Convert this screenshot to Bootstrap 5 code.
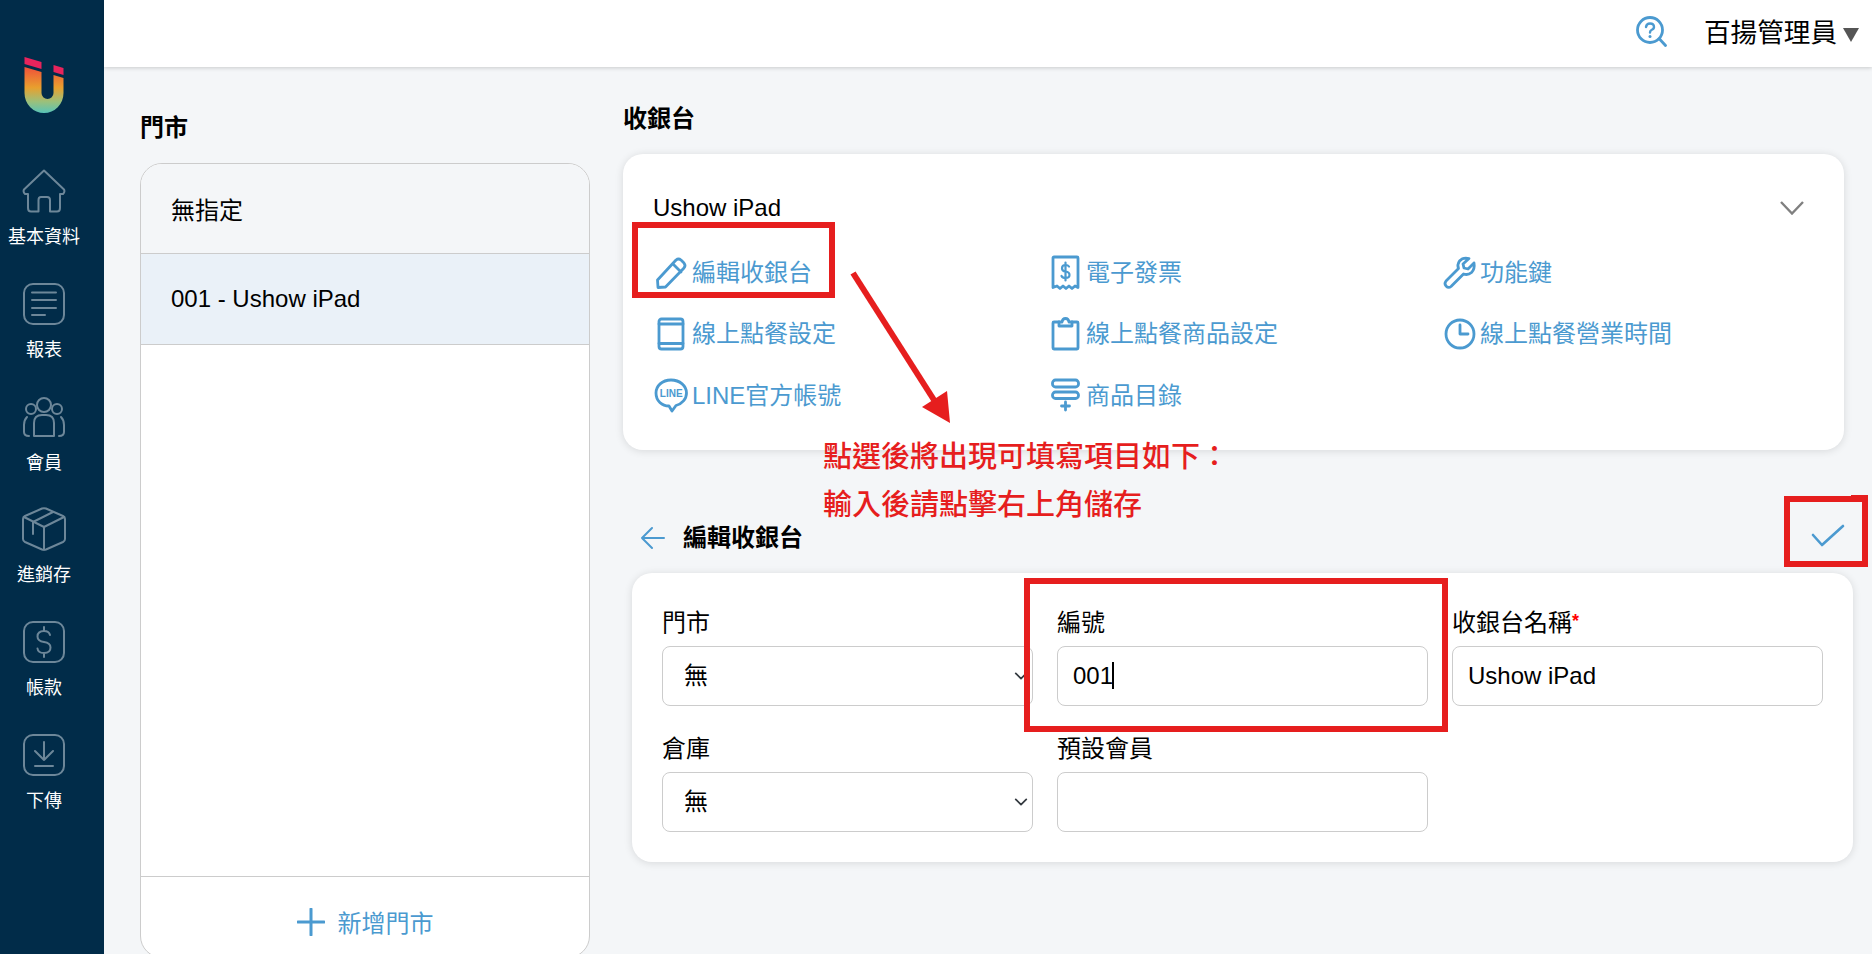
<!DOCTYPE html>
<html lang="zh-Hant">
<head>
<meta charset="UTF-8">
<title>收銀台</title>
<link href="https://cdn.jsdelivr.net/npm/bootstrap@5.3.0/dist/css/bootstrap.min.css" rel="stylesheet">
<style>
body { font-family: "Liberation Sans", "Noto Sans CJK TC", sans-serif; font-size: 24px; line-height: 36px; color: #000; background: #f4f6f8; overflow: hidden; height: 954px; }
.app-shell { height: 954px; }
.side-rail { width: 104px; flex: none; background: #012c49; padding: 57px 16px 0 0; }
.rail-logo { height: 56px; margin-bottom: 56px; }
.rail-item { width: 88px; height: 112.8px; color: #fff; font-size: 18px; line-height: 26px; text-decoration: none; }
.rail-item svg { width: 44px; height: 44px; margin-bottom: 11px; fill: none; stroke: #6d8799; stroke-width: 2; stroke-linecap: round; stroke-linejoin: round; }
.top-strip { height: 67px; background: #fff; box-shadow: 0 1px 4px rgba(0,0,0,.18); padding-right: 13px; position: relative; z-index: 1; }
.help-ico { width: 32px; height: 32px; margin-right: 37px; margin-top: -4px; }
.admin-name { font-size: 26.6px; margin-right: 6px; margin-top: -2px; }
.admin-tri { width: 16px; height: 14px; margin-top: 2px; }
.store-col { width: 450px; margin: 9px 33px 0 36px; flex: none; }
.reg-col { width: 1230px; flex: none; }
.work-area { padding-top: 34px; }
.sect-title { font-weight: 700; font-size: 24px; line-height: 36px; margin-bottom: 17px; }
.store-list { height: 795px; background: #fff; border: 1px solid #ccc; border-radius: 22px; overflow: hidden; }
.store-row { height: 90px; padding: 0 30px; border-bottom: 1px solid #ccc; background: #f4f6f8; }
.store-row.first-row { padding-top: 4px; }
.store-row.is-on { height: 91px; background: #eaf1f8; }
.store-add { height: 81px; border-top: 1px solid #ccc; color: #4b9ad0; padding-top: 10px; }
.add-txt { margin-left: 5px; padding-top: 3px; }
.panel-card { width: 1221px; background: #fff; border: 0; border-radius: 20px; box-shadow: 0 1px 8px rgba(0,0,0,.12); }
.reg-top { height: 296px; padding: 36px 0 0 30px; margin-bottom: 70px; }
.reg-head { width: 1151px; height: 36px; margin-bottom: 16px; }
.fn-grid { width: 1182px; }
.fn-link { height: 61.5px; color: #4b9ad0; text-decoration: none; }
.fn-link svg { width: 36px; height: 36px; flex: none; margin-right: 3px; fill: none; stroke: #4b9ad0; stroke-width: 2.8; stroke-linecap: round; stroke-linejoin: round; }
.edit-head { margin-left: 9px; height: 36px; margin-bottom: 17px; }
.edit-head svg { width: 24px; height: 24px; margin: 0 18px 0 9px; fill: none; stroke: #4b9ad0; stroke-width: 2; stroke-linecap: round; stroke-linejoin: round; }
.edit-card { margin-left: 9px; padding: 31px 30px 30px; }
.field-row { margin-bottom: 24px; }
.field-row:last-child { margin-bottom: 0; }
.field-lbl { display: block; line-height: 36px; padding-top: 1px; margin-bottom: 5px; height: 37px; }
.req-star { color: #f00; font-size: 18px; font-weight: 700; line-height: 0; vertical-align: 4px; }
.form-control.field-box, .form-select.field-box { height: 60px; font-size: 24px; color: #000; border-color: #ccc; border-radius: 8px; padding: 0 15px; }
.form-select.field-box { padding-left: 21px; background-position: right 2px center; background-size: 18px 14px; }
.caret-wrap { position: relative; }
.fake-caret { position: absolute; left: 55px; top: 16px; width: 1.5px; height: 27px; background: #000; }
.anno-box { position: absolute; border: 6px solid #e61e1e; z-index: 5; pointer-events: none; }
.anno-a { left: 632px; top: 222px; width: 203px; height: 76px; }
.anno-b { left: 1024px; top: 578px; width: 424px; height: 154px; }
.anno-c { left: 1784px; top: 496px; width: 84px; height: 71px; }
.anno-c::after { content: ""; position: absolute; right: -6px; top: -7px; width: 17px; height: 2px; background: #e61e1e; }
.anno-arrow { position: absolute; left: 0; top: 0; width: 1872px; height: 954px; z-index: 5; pointer-events: none; }
.anno-text { position: absolute; left: 823px; top: 433px; font-size: 29px; line-height: 48px; color: #e61e1e; font-weight: 500; z-index: 5; white-space: nowrap; }
</style>
</head>
<body>
<div class="d-flex app-shell">

    <!-- left rail -->
    <nav class="side-rail d-flex flex-column align-items-center">
        <svg class="rail-logo" width="44" height="56" viewBox="0 0 44 56">
            <defs>
                <linearGradient id="logoFill" x1="0" y1="0" x2="0" y2="1">
                    <stop offset="0" stop-color="#f0503a"/>
                    <stop offset=".45" stop-color="#e8a02e"/>
                    <stop offset=".75" stop-color="#9cc07a"/>
                    <stop offset="1" stop-color="#58c4b8"/>
                </linearGradient>
            </defs>
            <path d="M2.5 0 L19.5 5 V12 L2.5 7 Z M31.5 8 L41.5 11 V18 L31.5 15 Z" fill="#e8245c"/>
            <path d="M2.5 10 L19.5 15 V36 a6 6 0 0 0 12 0 V18 L41.5 21 V36 a19.5 20 0 0 1 -39 0 Z" fill="url(#logoFill)"/>
        </svg>
        <a class="rail-item d-flex flex-column align-items-center" href="#">
            <svg viewBox="0 0 44 44"><path d="M22 1.5 L2 20.5 Q0.8 23 3 25 H6 V39 Q6 42.5 9 42.5 H16.5 V31 Q16.5 28 19 28 H25 Q28 28 28 31 V42.5 H35 Q38 42.5 38 39 V25 H41 Q43.2 23 42 20.5 Z"/></svg>
            基本資料
        </a>
        <a class="rail-item d-flex flex-column align-items-center" href="#">
            <svg viewBox="0 0 44 44"><rect x="2" y="2" width="40" height="40" rx="9"/><path d="M10 10.5 H34 M10 18 H34 M10 26 H34 M10 33 H23"/></svg>
            報表
        </a>
        <a class="rail-item d-flex flex-column align-items-center" href="#">
            <svg viewBox="0 0 44 44"><circle cx="22" cy="10" r="7"/><circle cx="9" cy="14" r="5"/><circle cx="35" cy="14" r="5"/><path d="M12 41 V28 Q12 20 20 20 H24 Q32 20 32 28 V41 Z"/><path d="M5 22 Q2 25 2 30 V37 Q2 41 7 41 M39 22 Q42 25 42 30 V37 Q42 41 37 41"/></svg>
            會員
        </a>
        <a class="rail-item d-flex flex-column align-items-center" href="#">
            <svg viewBox="0 0 44 44"><path d="M20 1.5 Q22 .8 24 1.5 L41 9 Q43 10 43 12 V32 Q43 34 41 35 L24 42.5 Q22 43.2 20 42.5 L3 35 Q1 34 1 32 V12 Q1 10 3 9 Z"/><path d="M2 10 L22 20 L42 10 M22 20 V42.5 M11 15 L31 5 M11 15 V27"/></svg>
            進銷存
        </a>
        <a class="rail-item d-flex flex-column align-items-center" href="#">
            <svg viewBox="0 0 44 44"><rect x="2" y="2" width="40" height="40" rx="9"/><path d="M28 15 Q27 11 22 11 Q15.5 11 15.5 16.5 Q15.5 21 22 22 Q28.5 23 28.5 27.5 Q28.5 33 22 33 Q16 33 15.5 28.5 M22 7 V11 M22 33 V37"/></svg>
            帳款
        </a>
        <a class="rail-item d-flex flex-column align-items-center" href="#">
            <svg viewBox="0 0 44 44"><rect x="2" y="2" width="40" height="40" rx="9"/><path d="M22 9 V27 M13 18 L22 27 L31 18 M13 33 H31"/></svg>
            下傳
        </a>
    </nav>

    <div class="flex-grow-1">
        <header class="top-strip d-flex align-items-center justify-content-end">
            <svg class="help-ico" viewBox="0 0 32 32" fill="none" stroke="#4b9ad0" stroke-width="2.8" stroke-linecap="round">
                <circle cx="15" cy="14" r="12.5"/>
                <path d="M24.5 23 L30.5 29.5"/>
                <path d="M11 11 Q11.5 7.5 15 7.5 Q19 7.5 19 11 Q19 13 16.5 14 Q15 14.8 15 16.5" stroke-width="2.4"/>
                <path d="M15 20.5 V20.6" stroke-width="3"/>
            </svg>
            <span class="admin-name">百揚管理員</span>
            <svg class="admin-tri" viewBox="0 0 16 14"><path d="M0 0 H16 L8 14 Z" fill="#555"/></svg>
        </header>

        <main class="d-flex work-area">
            <!-- stores -->
            <section class="store-col">
                <div class="sect-title">門市</div>
                <div class="store-list d-flex flex-column">
                    <div class="store-row first-row d-flex align-items-center">無指定</div>
                    <div class="store-row is-on d-flex align-items-center">001 - Ushow iPad</div>
                    <div class="flex-grow-1"></div>
                    <div class="store-add d-flex align-items-center justify-content-center">
                        <svg class="me-2" width="28" height="28" viewBox="0 0 28 28" stroke="#4b9ad0" stroke-width="3" stroke-linecap="round"><path d="M14 1 V27 M1 14 H27"/></svg>
                        <span class="add-txt">新增門市</span>
                    </div>
                </div>
            </section>

            <!-- registers -->
            <section class="reg-col">
                <div class="sect-title">收銀台</div>
                <div class="card panel-card reg-top">
                    <div class="reg-head d-flex align-items-center justify-content-between">
                        <span>Ushow iPad</span>
                        <svg width="24" height="14" viewBox="0 0 24 14" fill="none" stroke="#808080" stroke-width="2.4"><path d="M1 1 L12 12.5 L23 1"/></svg>
                    </div>
                    <div class="row g-0 fn-grid">
                        <div class="col-4"><a class="fn-link d-flex align-items-center" href="#">
                            <svg viewBox="0 0 36 36"><path d="M5 32.5 L4.5 25 L23 5 Q25.5 3 28 5 L31 8 Q33 10.5 31 13 L12.5 32 Z M20 9 L28 17"/></svg>編輯收銀台</a></div>
                        <div class="col-4"><a class="fn-link d-flex align-items-center" href="#">
                            <svg viewBox="0 0 36 36"><path d="M7 2 H30 Q31 2 31 3 V32.5 L28 31 L25 33.5 L22 31 L19 33.5 L16 31 L13 33.5 L10 31 L6 32.5 V3 Q6 2 7 2 Z"/><path d="M22 11.5 Q21 10 18.5 10 Q15 10 15 13.2 Q15 16 18.5 16.5 Q22.5 17 22.5 20 Q22.5 23 18.5 23 Q15.5 23 14.5 21 M18.5 7.5 V25.5" stroke-width="2.2"/></svg>電子發票</a></div>
                        <div class="col-4"><a class="fn-link d-flex align-items-center" href="#">
                            <svg viewBox="0 0 36 36"><path d="M33 8 L27 14 L23 13 L22 9 L28 3.5 Q22 2 18.5 6 Q16 9.5 17.5 13.5 L5 26 Q3 28.5 5 31 Q7.5 33.5 10 31.5 L22.5 19 Q27 20.5 30.5 17.5 Q34 14 33 8 Z"/></svg>功能鍵</a></div>
                        <div class="col-4"><a class="fn-link d-flex align-items-center" href="#">
                            <svg viewBox="0 0 36 36"><rect x="6" y="3" width="24" height="30" rx="2.5"/><path d="M6 8 H30 M6 27.5 H30"/></svg>線上點餐設定</a></div>
                        <div class="col-4"><a class="fn-link d-flex align-items-center" href="#">
                            <svg viewBox="0 0 36 36"><path d="M12 6 H7 Q6 6 6 7 V32 Q6 33 7 33 H30 Q31 33 31 32 V7 Q31 6 30 6 H25"/><path d="M12 10 V6 H15 Q15.5 2.5 18.5 2.5 Q21.5 2.5 22 6 H25 V10 Z"/></svg>線上點餐商品設定</a></div>
                        <div class="col-4"><a class="fn-link d-flex align-items-center" href="#">
                            <svg viewBox="0 0 36 36"><circle cx="19" cy="18" r="14"/><path d="M19 9 V18 H27"/></svg>線上點餐營業時間</a></div>
                        <div class="col-4"><a class="fn-link d-flex align-items-center" href="#">
                            <svg viewBox="0 0 36 36"><path d="M18 2 C9 2 3 8 3 15 C3 23 9 28 16 28 L19 33 L23 27.5 C29 26 33.5 21 33.5 15 C33.5 8 27 2 18 2 Z"/><text x="18.2" y="19" text-anchor="middle" font-size="10" font-weight="700" font-family="Liberation Sans, sans-serif" fill="#4b9ad0" stroke="none">LINE</text></svg>LINE官方帳號</a></div>
                        <div class="col-4"><a class="fn-link d-flex align-items-center" href="#">
                            <svg viewBox="0 0 36 36"><rect x="5.5" y="2" width="26" height="7" rx="3"/><rect x="5.5" y="14" width="26" height="6.5" rx="3"/><path d="M18.5 24 V32 M14.5 28 H22.5"/></svg>商品目錄</a></div>
                    </div>
                </div>

                <div class="edit-head d-flex align-items-center fw-bold">
                    <svg viewBox="0 0 24 24"><path d="M23 12 H1 M11 2 L1 12 L11 22"/></svg>
                    編輯收銀台
                </div>
                <div class="card panel-card edit-card">
                    <div class="row field-row">
                        <div class="col-4">
                            <label class="field-lbl">門市</label>
                            <select class="form-select field-box"><option>無</option></select>
                        </div>
                        <div class="col-4">
                            <label class="field-lbl">編號</label>
                            <div class="caret-wrap">
                                <input class="form-control field-box" value="001">
                                <span class="fake-caret"></span>
                            </div>
                        </div>
                        <div class="col-4">
                            <label class="field-lbl">收銀台名稱<span class="req-star">*</span></label>
                            <input class="form-control field-box" value="Ushow iPad">
                        </div>
                    </div>
                    <div class="row field-row">
                        <div class="col-4">
                            <label class="field-lbl">倉庫</label>
                            <select class="form-select field-box"><option>無</option></select>
                        </div>
                        <div class="col-4">
                            <label class="field-lbl">預設會員</label>
                            <input class="form-control field-box">
                        </div>
                    </div>
                </div>
            </section>
        </main>
    </div>
</div>

<!-- red annotations drawn over the screenshot -->
<div class="anno-box anno-a"></div>
<div class="anno-box anno-b"></div>
<div class="anno-box anno-c"></div>
<svg class="anno-arrow" viewBox="0 0 1872 954">
    <path d="M853 273 L934 400" stroke="#e61e1e" stroke-width="6" fill="none"/>
    <path d="M922 407 L947 391 L950 423 Z" fill="#e61e1e"/>
    <path d="M1813 535 L1822 545 L1843 526" stroke="#4b9ad0" stroke-width="2.6" fill="none" stroke-linecap="round" stroke-linejoin="round"/>
</svg>
<div class="anno-text">點選後將出現可填寫項目如下：<br>輸入後請點擊右上角儲存</div>

<script src="https://cdn.jsdelivr.net/npm/bootstrap@5.3.0/dist/js/bootstrap.bundle.min.js"></script>
</body>
</html>
